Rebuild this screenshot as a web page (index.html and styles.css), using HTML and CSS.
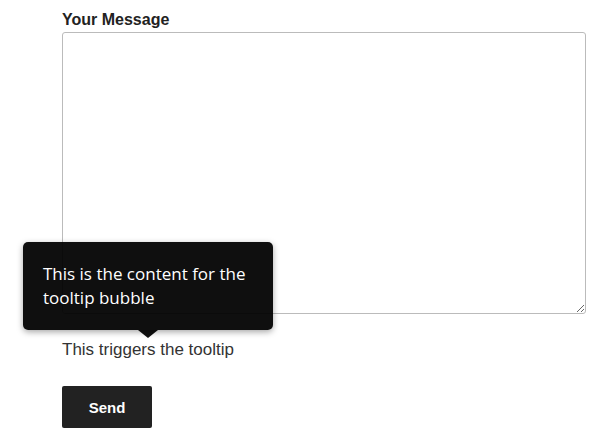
FILE: index.html
```html
<!DOCTYPE html>
<html lang="en">
<head>
    <meta charset="UTF-8">
    <meta name="viewport" content="width=device-width, initial-scale=1.0">
    <title>Contact Form</title>
    <link rel="stylesheet" href="styles.css">
</head>
<body>
    <form class="contact-form">
        <label class="field-label" for="message">Your Message</label>
        <textarea id="message" class="message-box"></textarea>

        <p class="trigger-row">
            <span class="tooltip-trigger">
                This triggers the tooltip
                <span class="tooltip-bubble">This is the content for the tooltip bubble</span>
            </span>
        </p>

        <button type="button" class="send-btn">Send</button>
    </form>
</body>
</html>
```

FILE: styles.css
```css
/* Basic Reset & Body Styling */
body {
    margin: 0;
    padding: 0;
    background: #ffffff;
    color: #333;
    font-family: 'Liberation Sans', Arial, sans-serif;
}

/* Form wrapper */
.contact-form {
    padding: 8px 0 0 62px;
    width: 524px;
}

.field-label {
    display: block;
    font-size: 16px;
    line-height: 24px;
    font-weight: 700;
    color: #222;
}

.message-box {
    display: block;
    width: 524px;
    height: 282px;
    margin: 0;
    box-sizing: border-box;
    border: 1px solid #bbb;
    border-radius: 3px;
    background: #fff;
    font-family: inherit;
}

/* Tooltip */
.trigger-row {
    margin: 24px 0;
    font-size: 17px;
    line-height: 24px;
    color: #333;
}

.tooltip-trigger {
    position: relative;
    display: inline-block;
}

.tooltip-bubble {
    position: absolute;
    bottom: 32px;
    left: 50%;
    margin-left: -125px;
    width: 250px;
    box-sizing: border-box;
    padding: 20px;
    background: rgba(0, 0, 0, 0.94);
    color: #fff;
    border-radius: 5px;
    box-shadow: 0 2px 6px rgba(0, 0, 0, 0.35);
    font-family: 'Open Sans', 'Noto Sans', sans-serif;
    font-size: 17px;
    line-height: 24px;
}

.tooltip-bubble::after {
    content: '';
    position: absolute;
    top: 100%;
    left: 50%;
    margin-left: -10px;
    border-left: 10px solid transparent;
    border-right: 10px solid transparent;
    border-top: 8px solid rgba(0, 0, 0, 0.94);
}

/* Buttons */
.send-btn {
    display: block;
    width: 90px;
    height: 42px;
    background: #222;
    color: #fff;
    border: none;
    border-radius: 2px;
    font-family: 'Liberation Sans', Arial, sans-serif;
    font-size: 15px;
    font-weight: 700;
    cursor: pointer;
}
```
